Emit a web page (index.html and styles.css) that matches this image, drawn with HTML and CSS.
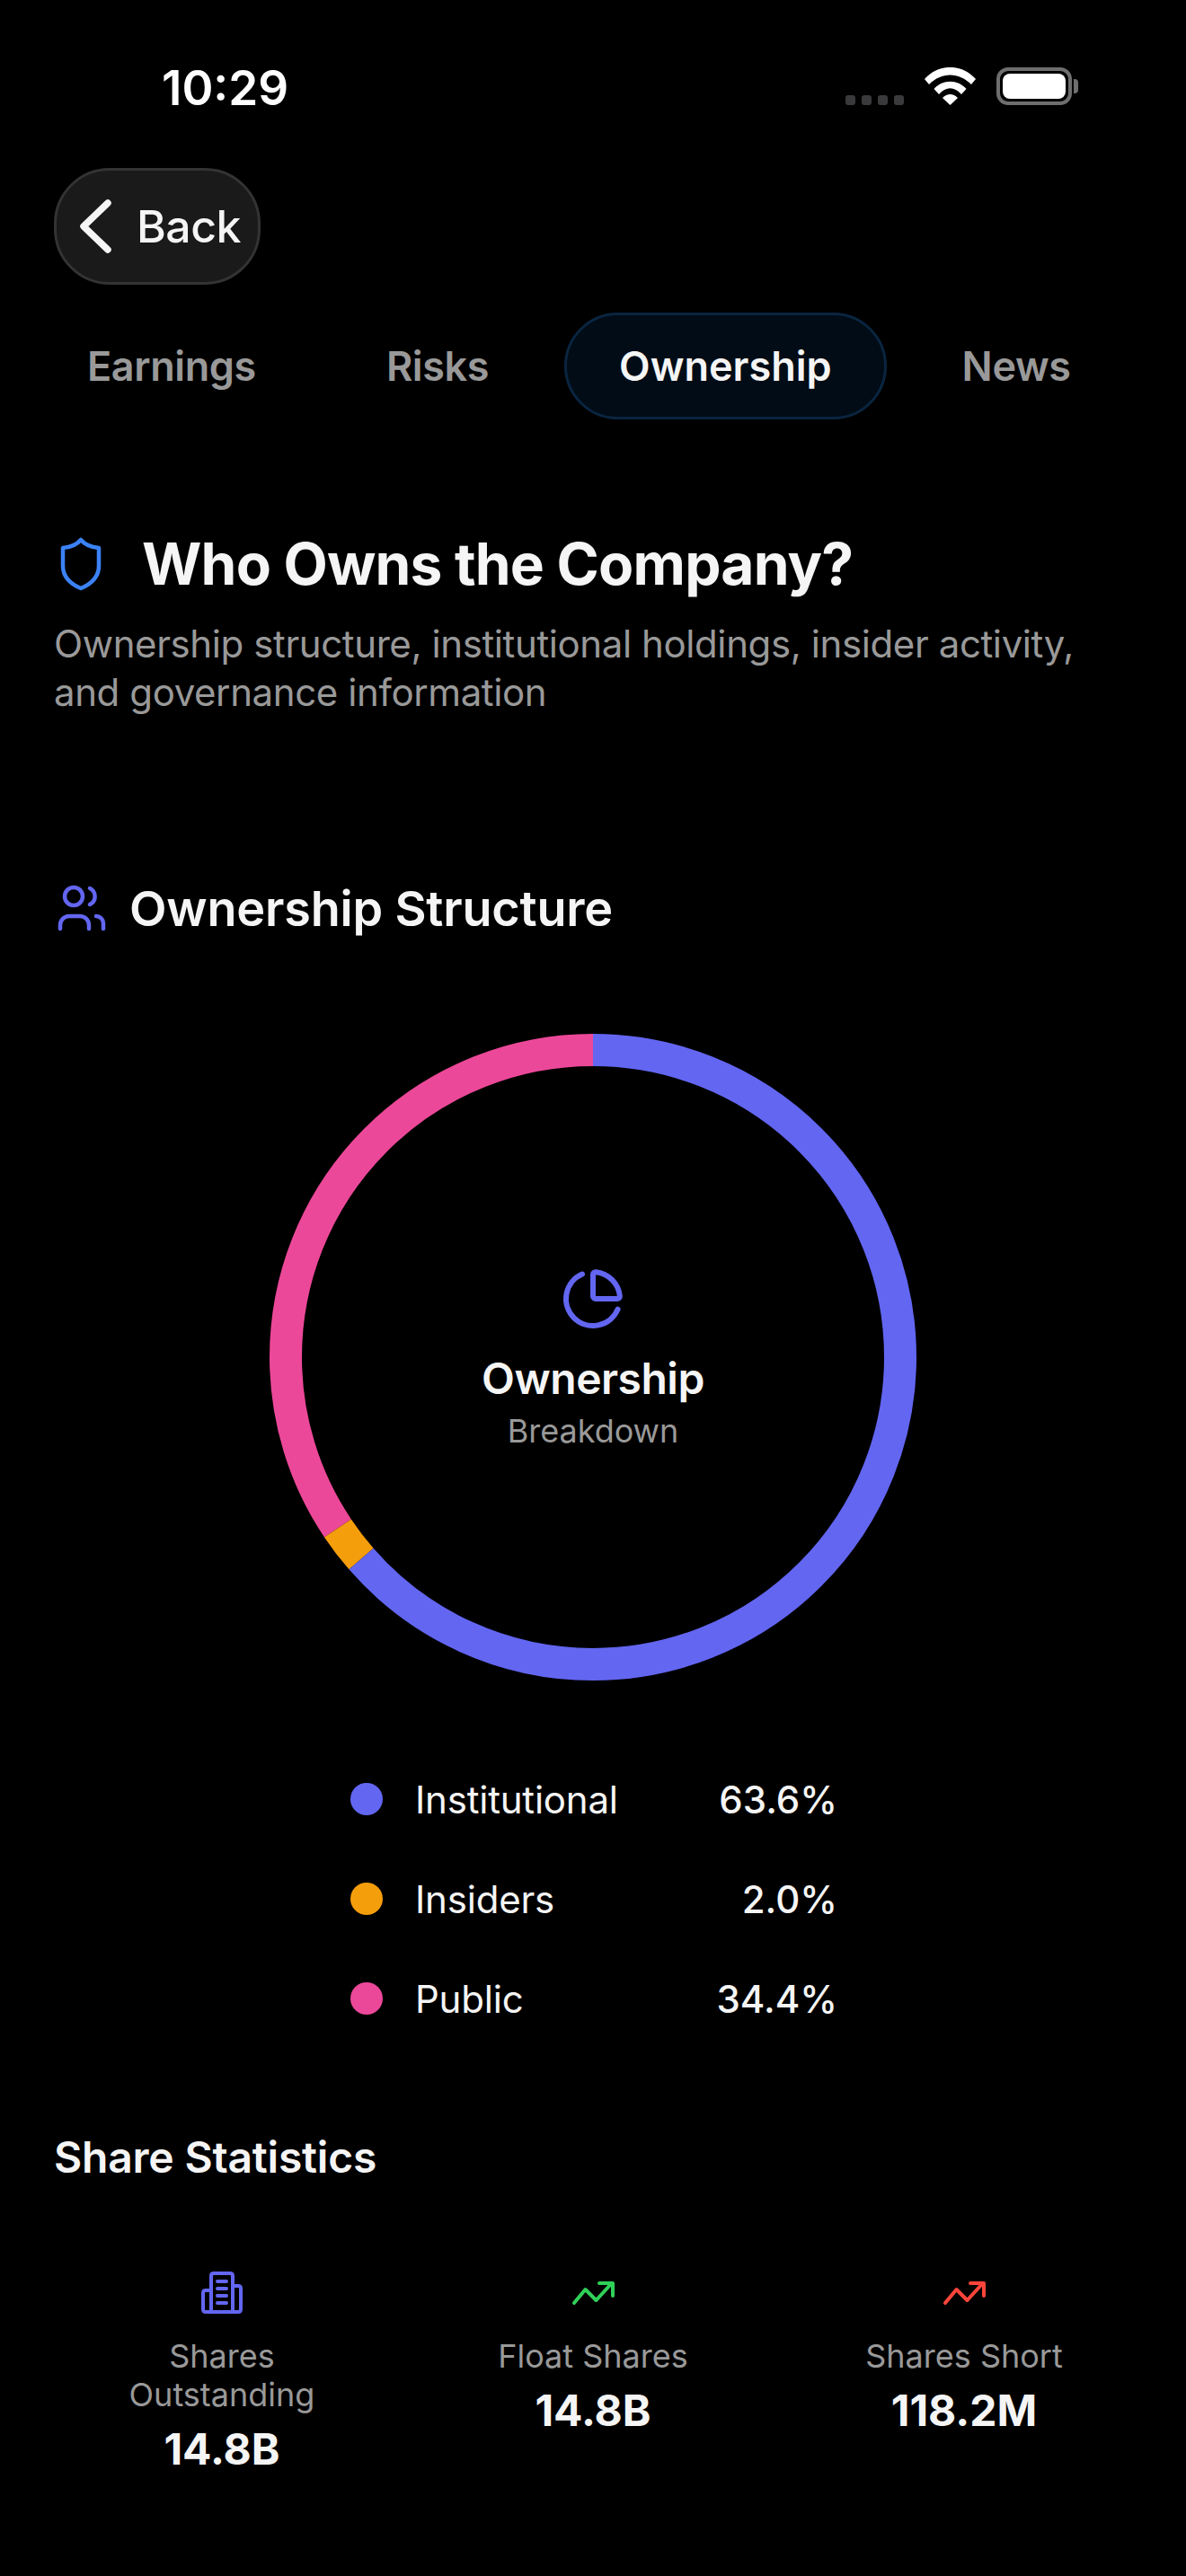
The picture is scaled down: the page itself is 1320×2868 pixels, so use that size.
FILE: index.html
```html
<!DOCTYPE html>
<html lang="en">
<head>
<meta charset="utf-8">
<title>Ownership</title>
<link rel="stylesheet" href="styles.css">
</head>
<body>
<div class="page">
  <div class="status">
    <span class="time">10:29</span>
    <div class="status-icons">
      <div class="signal"><i></i><i></i><i></i><i></i></div>
      <svg class="wifi" width="57" height="42" viewBox="0 0 57 42"><path fill="#fff" d="M0 13 C16 -4.5 41 -4.5 57 13 L52 19 C38 5 19 5 5 19 Z M10.5 24 C20 13 37 13 46.5 24 L41 30 C33 21 24 21 16 30 Z M20 34 C25 28.5 32 28.5 37 34 L28.5 42 Z"/></svg>
      <div class="battery"><div class="battery-body"><div class="battery-fill"></div></div><div class="battery-nub"></div></div>
    </div>
  </div>

  <button class="back">
    <svg width="36" height="60" viewBox="0 0 36 60"><path d="M32 4 L5 30 L32 56" fill="none" stroke="#f5f5f5" stroke-width="7.5" stroke-linecap="round" stroke-linejoin="round"/></svg>
    <span>Back</span>
  </button>

  <nav class="tabs">
    <span class="tab">Earnings</span>
    <span class="tab">Risks</span>
    <span class="tab active">Ownership</span>
    <span class="tab">News</span>
  </nav>

  <header class="intro">
    <div class="intro-title">
      <svg width="48" height="60" viewBox="0 0 48 60"><path d="M24 3 C28 8 34 11 44 12 V32 C44 44 36 52 24 57 C12 52 4 44 4 32 V12 C14 11 20 8 24 3 Z" fill="none" stroke="#3b82f6" stroke-width="4.5" stroke-linejoin="round"/></svg>
      <h1>Who Owns the Company?</h1>
    </div>
    <p>Ownership structure, institutional holdings, insider activity, and governance information</p>
  </header>

  <section class="structure">
    <div class="section-title">
      <svg width="60" height="60" viewBox="0 0 60 60" fill="none" stroke="#6366f1" stroke-width="4.5" stroke-linecap="round" stroke-linejoin="round"><circle cx="22" cy="17" r="10"/><path d="M7 53 V49 A10 10 0 0 1 17 39 H29 A10 10 0 0 1 39 49 V53"/><path d="M40 8 A10 10 0 0 1 40 26"/><path d="M47 39 A8 8 0 0 1 55 47 V53"/></svg>
      <h2>Ownership Structure</h2>
    </div>

    <div class="donut">
      <svg class="donut-ring" width="720" height="720" viewBox="0 0 720 720">
        <circle class="seg seg-pink" cx="360" cy="360" r="342" pathLength="100" stroke-dasharray="34.4 65.6" stroke-dashoffset="-65.6"/>
        <circle class="seg seg-orange" cx="360" cy="360" r="342" pathLength="100" stroke-dasharray="2 98" stroke-dashoffset="-63.6"/>
        <circle class="seg seg-indigo" cx="360" cy="360" r="342" pathLength="100" stroke-dasharray="63.6 36.4" stroke-dashoffset="0"/>
      </svg>
      <div class="donut-center">
        <svg width="72" height="72" viewBox="0 0 24 24" fill="none" stroke="#6366f1" stroke-width="2" stroke-linecap="round" stroke-linejoin="round"><path d="M21 12c.552 0 1.005-.449.95-.998a10 10 0 0 0-8.953-8.951c-.55-.055-.998.398-.998.95v8a1 1 0 0 0 1 1z"/><path d="M21.21 15.89A10 10 0 1 1 8 2.83"/></svg>
        <div class="donut-title">Ownership</div>
        <div class="donut-sub">Breakdown</div>
      </div>
    </div>

    <ul class="legend">
      <li><i class="dot dot-indigo"></i><span class="legend-name">Institutional</span><span class="legend-value">63.6%</span></li>
      <li><i class="dot dot-orange"></i><span class="legend-name">Insiders</span><span class="legend-value">2.0%</span></li>
      <li><i class="dot dot-pink"></i><span class="legend-name">Public</span><span class="legend-value">34.4%</span></li>
    </ul>
  </section>

  <section class="stats">
    <h3>Share Statistics</h3>
    <div class="stat-grid">
      <div class="stat">
        <svg width="48" height="48" viewBox="0 0 48 48" fill="none" stroke="#6366f1" stroke-width="4" stroke-linecap="round" stroke-linejoin="round"><path d="M12 45 V5 Q12 2 15 2 H33 Q36 2 36 5 V45 Z"/><path d="M12 21 H6 Q3 21 3 24 V42 Q3 45 6 45 H42 Q45 45 45 42 V19 Q45 16 42 16 H36"/><path d="M19 11 H29 M19 19 H29 M19 27 H29 M19 35 H29"/></svg>
        <div class="stat-label">Shares Outstanding</div>
        <div class="stat-value">14.8B</div>
      </div>
      <div class="stat">
        <svg width="48" height="48" viewBox="0 0 48 48" fill="none" stroke="#30d158" stroke-width="4" stroke-linecap="round" stroke-linejoin="round"><path d="M3 35 L15.5 20 L27.5 32 L44 14"/><path d="M31 13 H46 V27"/></svg>
        <div class="stat-label">Float Shares</div>
        <div class="stat-value">14.8B</div>
      </div>
      <div class="stat">
        <svg width="48" height="48" viewBox="0 0 48 48" fill="none" stroke="#ff453a" stroke-width="4" stroke-linecap="round" stroke-linejoin="round"><path d="M3 35 L15.5 20 L27.5 32 L44 14"/><path d="M31 13 H46 V27"/></svg>
        <div class="stat-label">Shares Short</div>
        <div class="stat-value">118.2M</div>
      </div>
    </div>
  </section>
</div>
</body>
</html>
```

FILE: styles.css
```css
* { box-sizing: border-box; }
html, body { margin: 0; padding: 0; background: #000; }
body { font-family: Inter, "Liberation Sans", sans-serif; color: #f5f5f5; }
.page { width: 1320px; height: 2868px; overflow: hidden; background: #000; }

.status { height: 187px; padding: 66px 120px 0 180px; display: flex; justify-content: space-between; align-items: flex-start; }
.time { font-size: 53px; font-weight: 600; line-height: 64px; color: #fff; }
.status-icons { display: flex; align-items: flex-start; padding-top: 9px; }
.signal { display: flex; gap: 7px; margin-top: 31px; margin-right: 23px; }
.signal i { width: 11px; height: 11px; border-radius: 3px; background: #3a3a3c; }
.wifi { margin-right: 23px; display: block; }
.battery { display: flex; align-items: center; }
.battery-body { width: 84px; height: 42px; border: 4px solid #6e6e6e; border-radius: 13px; padding: 3px; }
.battery-fill { width: 100%; height: 100%; background: #fff; border-radius: 8px; }
.battery-nub { width: 5px; height: 16px; background: #6e6e6e; border-radius: 0 4px 4px 0; margin-left: 2px; }

.back { margin: 0 0 0 60px; width: 230px; height: 130px; padding: 0 0 0 25px; display: flex; align-items: center; gap: 28px; background: #1a1a1a; border: 3px solid #333; border-radius: 62px; color: #f5f5f5; font: 500 50px Inter, sans-serif; letter-spacing: -0.5px; }
.back svg { flex: none; }

.tabs { margin-top: 31px; padding-left: 36px; display: flex; gap: 23px; white-space: nowrap; }
.tab { padding: 0 58px; height: 119px; display: flex; align-items: center; border: 3px solid transparent; border-radius: 60px; font-size: 45px; font-weight: 600; letter-spacing: -0.4px; color: #999; }
.tab.active { background: #010c16; border-color: #0a2540; color: #f5f5f5; letter-spacing: 0; }

.intro { margin-top: 126px; padding: 0 60px; }
.intro-title { display: flex; align-items: center; gap: 44px; height: 70px; }
.intro-title svg { margin-left: 6px; flex: none; }
.intro h1 { margin: 0; font-size: 64px; font-weight: 700; line-height: 70px; letter-spacing: -0.8px; }
.intro p { margin: 27px 0 0; font-size: 42px; line-height: 54px; font-weight: 400; letter-spacing: -0.4px; color: #999; }

.structure { margin-top: 183px; }
.section-title { padding: 0 60px; display: flex; align-items: center; gap: 24px; height: 60px; }
.section-title h2 { margin: 0; font-size: 54px; font-weight: 600; letter-spacing: -0.2px; }
.donut { position: relative; width: 720px; height: 720px; margin: 110px auto 0; }
.donut-ring { display: block; transform: rotate(-90deg); }
.seg { fill: none; stroke-width: 36; }
.seg-indigo { stroke: #6366f1; }
.seg-orange { stroke: #f59e0b; }
.seg-pink { stroke: #ec4899; }
.donut-center { position: absolute; inset: 0; padding-top: 2px; display: flex; flex-direction: column; align-items: center; justify-content: center; }
.donut-center svg { display: block; }
.donut-title { font-size: 48px; font-weight: 600; line-height: 58px; margin-top: 24px; letter-spacing: -0.5px; }
.donut-sub { font-size: 36px; line-height: 44px; color: #999; margin-top: 7px; }

.legend { list-style: none; margin: 102px 0 0 390px; padding: 0; width: 542px; display: flex; flex-direction: column; gap: 51px; }
.legend li { display: flex; align-items: center; height: 60px; }
.dot { width: 36px; height: 36px; border-radius: 50%; margin-right: 36px; flex: none; }
.dot-indigo { background: #6366f1; }
.dot-orange { background: #f59e0b; }
.dot-pink { background: #ec4899; }
.legend-name { flex: 1; font-size: 42px; letter-spacing: -0.2px; }
.legend-value { font-size: 42px; font-weight: 500; }

.stats { margin-top: 117px; padding: 0 60px; }
.stats h3 { margin: 0; font-size: 48px; font-weight: 600; line-height: 60px; letter-spacing: -0.2px; }
.stat-grid { margin-top: 97px; display: grid; grid-template-columns: repeat(3, 374px); column-gap: 39px; }
.stat { display: flex; flex-direction: column; align-items: center; text-align: center; padding: 0 36px; }
.stat-label { margin-top: 25px; font-size: 36px; line-height: 43px; color: #999; }
.stat-value { margin-top: 10px; font-size: 48px; line-height: 58px; font-weight: 700; }
```
